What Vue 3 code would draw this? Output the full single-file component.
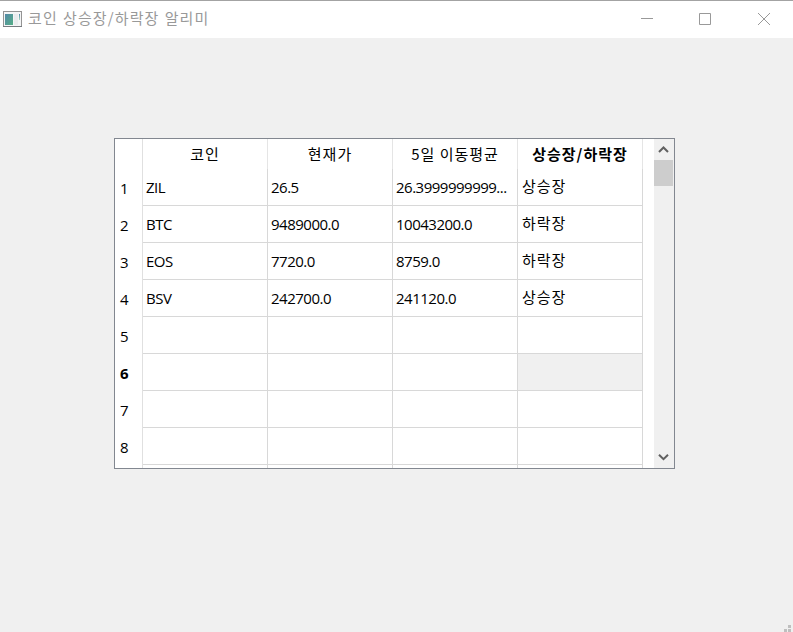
<script setup>
const columns = ['코인', '현재가', '5일 이동평균', '상승장/하락장']
const rows = [
  ['ZIL', '26.5', '26.3999999999...', '상승장'],
  ['BTC', '9489000.0', '10043200.0', '하락장'],
  ['EOS', '7720.0', '8759.0', '하락장'],
  ['BSV', '242700.0', '241120.0', '상승장'],
  ['', '', '', ''],
  ['', '', '', ''],
  ['', '', '', ''],
  ['', '', '', ''],
  ['', '', '', ''],
]
const visibleRows = 8
const current = { row: 5, col: 3 }
</script>

<template>
  <div class="window">
    <header class="titlebar">
      <svg class="app-icon" width="19" height="16" viewBox="0 0 19 16" shape-rendering="crispEdges">
        <defs>
          <linearGradient id="pane" x1="0" y1="0" x2="1" y2="1">
            <stop offset="0" stop-color="#5489a8" />
            <stop offset="1" stop-color="#55ae86" />
          </linearGradient>
          <linearGradient id="side" x1="0" y1="0" x2="0" y2="1">
            <stop offset="0" stop-color="#5489a8" />
            <stop offset="1" stop-color="#a8d8c0" />
          </linearGradient>
        </defs>
        <rect x="0.5" y="0.5" width="18" height="15" fill="#f4f5f6" stroke="#949494" />
        <rect x="0" y="15" width="19" height="1" fill="#777b80" />
        <rect x="2" y="3" width="8" height="11" fill="url(#pane)" />
        <rect x="11" y="3" width="4" height="11" fill="#e9ebed" />
        <rect x="16" y="3" width="1" height="6" fill="url(#side)" />
      </svg>
      <h1 class="title">코인 상승장/하락장 알리미</h1>
      <div class="controls">
        <svg class="minimize" width="12" height="12" viewBox="0 0 12 12"><path d="M0 5.5H12" /></svg>
        <svg class="maximize" width="12" height="12" viewBox="0 0 12 12"><path d="M.5.5H11.5V11.5H.5Z" /></svg>
        <svg width="12" height="12" viewBox="0 0 12 12"><path d="M0 0L12 12M12 0L0 12" /></svg>
      </div>
    </header>
    <main class="content">
      <div class="table-frame">
        <div class="table">
          <div class="row head">
            <div class="index"></div>
            <div v-for="(c, i) in columns" :key="c" class="cell" :class="{ bold: i === current.col }">{{ c }}</div>
          </div>
          <div v-for="(r, ri) in rows" :key="ri" class="row">
            <div class="index" :class="{ bold: ri === current.row }">{{ ri < visibleRows ? ri + 1 : '' }}</div>
            <div
              v-for="(v, ci) in r"
              :key="ci"
              class="cell"
              :class="{ korean: ci === 3, current: ri === current.row && ci === current.col }"
            >{{ v }}</div>
          </div>
        </div>
        <div class="scrollbar">
          <svg class="arrow" width="20" height="21" viewBox="0 0 20 21"><path d="M5 13L9.5 8.5L14 13" /></svg>
          <div class="thumb"></div>
          <svg class="arrow down" width="20" height="21" viewBox="0 0 20 21"><path d="M5 7.7L9.5 12.2L14 7.7" /></svg>
        </div>
      </div>
      <svg class="grip" width="7" height="7" viewBox="0 0 7 7" shape-rendering="crispEdges">
        <path d="M4 0h3v3h-3zM0 4h3v3h-3zM4 4h3v3h-3z" />
      </svg>
    </main>
  </div>
</template>

<style>
body {
  margin: 0;
}
</style>

<style scoped>
.window {
  box-sizing: border-box;
  width: 793px;
  height: 632px;
  display: flex;
  flex-direction: column;
  border-top: 1px solid #a3a3a3;
  background: #f0f0f0;
  overflow: hidden;
  font-family: "Open Sans", "Noto Sans CJK KR", sans-serif;
}
.titlebar {
  box-sizing: border-box;
  height: 37px;
  display: flex;
  align-items: center;
  background: #fff;
  padding: 0 23px 1px 3px;
}
.app-icon {
  margin-right: 6px;
}
.title {
  margin: 0;
  padding-bottom: 2px;
  font: 400 15px/20px "Noto Sans CJK KR", sans-serif;
  letter-spacing: 1.1px;
  word-spacing: 0.8px;
  color: #999;
  white-space: nowrap;
}
.controls {
  margin-left: auto;
  display: flex;
}
.minimize {
  margin-right: 46px;
}
.maximize {
  margin-right: 47px;
}
.controls path {
  fill: none;
  stroke: #999;
}
.content {
  flex: 1;
  display: flex;
  flex-direction: column;
  padding: 100px 2px 0 114px;
}
.table-frame {
  box-sizing: border-box;
  width: 561px;
  height: 331px;
  display: flex;
  justify-content: space-between;
  border: 1px solid #828790;
  background: #fff;
  overflow: hidden;
}
.row {
  display: grid;
  grid-template-columns: 28px repeat(4, 125px);
  height: 37px;
}
.index,
.cell {
  box-sizing: border-box;
  border-right: 1px solid #d8d8d8;
  font-size: 15px;
  letter-spacing: -0.5px;
  line-height: 36px;
  color: #000;
  white-space: nowrap;
  overflow: hidden;
}
.index {
  padding-left: 5px;
  line-height: 38px;
  border-right-color: #e0e0e0;
}
.cell {
  padding-left: 3px;
  border-bottom: 1px solid #d8d8d8;
}
.cell.korean {
  padding-left: 4px;
  font: 400 15px/34px "Noto Sans CJK KR", sans-serif;
  letter-spacing: 0.9px;
}
.head {
  height: 30px;
}
.head .cell {
  padding: 0;
  border-bottom: 0;
  border-right-color: #e5e5e5;
  text-align: center;
  font: 400 15px/29px "Noto Sans CJK KR", sans-serif;
  letter-spacing: 1px;
}
.index.bold,
.head .cell.bold {
  font-weight: 700;
}
.cell.current {
  background: #f0f0f0;
}
.scrollbar {
  width: 20px;
  display: flex;
  flex-direction: column;
  background: #f0f0f0;
}
.thumb {
  width: 19px;
  height: 26px;
  background: #cdcdcd;
}
.arrow path {
  fill: none;
  stroke: #606060;
  stroke-width: 2;
}
.arrow.down {
  margin-top: auto;
}
.grip {
  margin: auto 0 0 auto;
  fill: #bfbfbf;
}
</style>
